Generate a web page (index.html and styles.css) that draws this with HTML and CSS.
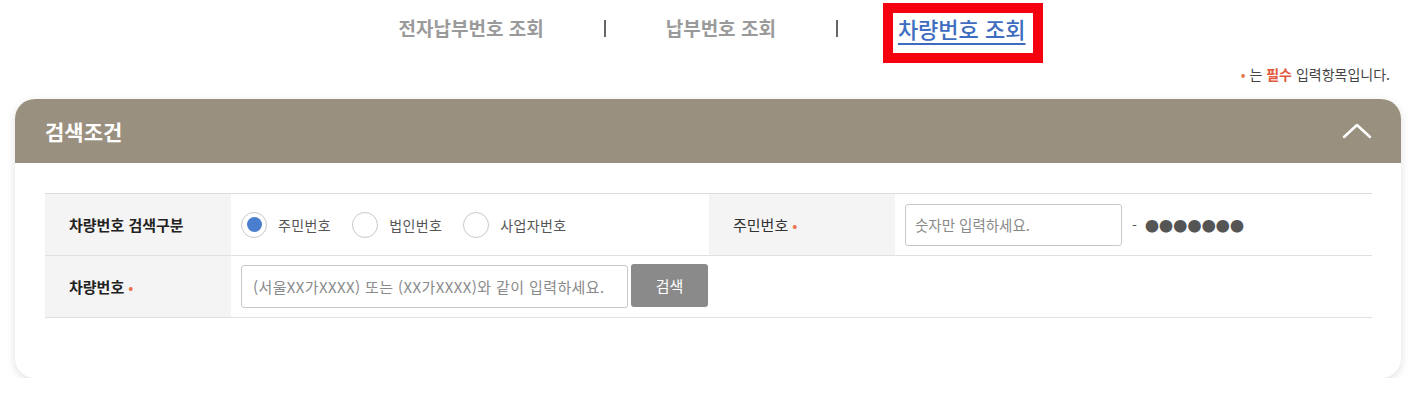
FILE: index.html
```html
<!DOCTYPE html>
<html lang="ko">
<head>
    <meta charset="UTF-8">
    <meta name="viewport" content="width=device-width, initial-scale=1.0">
    <title>차량번호 조회</title>
    <link rel="stylesheet" href="styles.css">
</head>
<body>
    <ul class="tabs">
        <li><a>전자납부번호 조회</a></li>
        <li class="sep"></li>
        <li><a>납부번호 조회</a></li>
        <li class="sep"></li>
        <li class="active"><a>차량번호 조회</a></li>
    </ul>

    <p class="notice"><span class="dot">•</span> 는 <strong>필수</strong> 입력항목입니다.</p>

    <div class="card">
        <div class="card-head">
            <h2>검색조건</h2>
            <svg class="toggle" width="30" height="16" viewBox="0 0 30 16">
                <polyline points="2,14 15,2 28,14" fill="none" stroke="#fff" stroke-width="2.5" stroke-linecap="round" stroke-linejoin="round"/>
            </svg>
        </div>
        <div class="card-body">
            <div class="search-table">
                <div class="th">차량번호 검색구분</div>
                <div class="td">
                    <label class="radio checked"><span class="circle"></span>주민번호</label>
                    <label class="radio"><span class="circle"></span>법인번호</label>
                    <label class="radio"><span class="circle"></span>사업자번호</label>
                </div>
                <div class="th light">주민번호 <span class="req">•</span></div>
                <div class="td">
                    <input type="text" class="input-jumin" placeholder="숫자만 입력하세요.">
                    <span class="dash">-</span>
                    <span class="masked">●●●●●●●</span>
                </div>

                <div class="th">차량번호 <span class="req">•</span></div>
                <div class="td wide">
                    <input type="text" class="input-car" placeholder="(서울XX가XXXX) 또는 (XX가XXXX)와 같이 입력하세요.">
                    <button>검색</button>
                </div>
            </div>
        </div>
    </div>
</body>
</html>
```

FILE: styles.css
```css
body { margin: 0; background: #fff; font-family: "Noto Sans CJK KR", "Noto Sans", sans-serif; color: #222; }

.tabs { list-style: none; margin: 0; padding: 14px 0 0; height: 50px; display: flex; justify-content: center; align-items: flex-start; gap: 60px; font-size: 19px; font-weight: bold; line-height: 28px; }
.tabs a { color: #9a9a9a; }
.tabs .sep { width: 2px; height: 17px; margin-top: 6px; background: #666; }
.tabs .active { position: relative; font-size: 22px; font-weight: 500; }
.tabs .active a { color: #3d6cc0; text-decoration: underline; text-decoration-thickness: 2px; text-underline-offset: 5px; }
.tabs .active::after { content: ""; position: absolute; left: -15px; right: -18px; top: -11px; bottom: -21px; border: 10px solid #f5000f; }

.notice { margin: 0; height: 20px; line-height: 20px; text-align: right; padding-right: 34px; font-size: 14px; color: #444; }
.notice .dot { color: #e8754a; }
.notice strong { color: #e2583c; }

.card { margin: 15px 23px 0 15px; border-radius: 20px; background: #fff; box-shadow: 0 3px 10px rgba(0, 0, 0, 0.12); overflow: hidden; }
.card-head { height: 64px; background: #9a907f; display: flex; align-items: center; justify-content: space-between; padding: 0 29px 0 30px; }
.card-head h2 { margin: 0; color: #fff; font-size: 21px; font-weight: bold; }
.card-body { padding: 30px 29px 60px 30px; }

.search-table { display: grid; grid-template-columns: 186px 478px 186px 1fr; border-top: 1px solid #dcdcdc; }
.th, .td { height: 61px; border-bottom: 1px solid #e0e0e0; display: flex; align-items: center; }
.th { background: #f4f4f4; padding-left: 24px; font-size: 15px; font-weight: bold; color: #222; }
.th.light { font-weight: normal; color: #333; }
.td { padding-left: 10px; font-size: 14px; color: #555; }
.td.wide { grid-column: 2 / 5; }
.req { color: #e8754a; margin-left: 4px; font-weight: normal; }

.radio { display: flex; align-items: center; margin-right: 21px; letter-spacing: 0.4px; }
.radio .circle { width: 24px; height: 24px; border: 1px solid #c8c8c8; border-radius: 50%; margin-right: 11px; display: flex; align-items: center; justify-content: center; }
.radio.checked .circle::after { content: ""; width: 15px; height: 15px; border-radius: 50%; background: #4a7fd0; }

input { font-family: inherit; font-size: 14px; border: 1px solid #c8c8c8; border-radius: 3px; padding: 0 10px; box-sizing: border-box; color: #333; }
input::placeholder { color: #8a8a8a; }
.input-jumin { width: 217px; height: 42px; padding-left: 9px; font-size: 14.5px; }
.input-car { width: 387px; height: 43px; padding-left: 11px; font-size: 15px; letter-spacing: 0.4px; }
.dash { margin: 0 8px 0 10px; color: #555; }
.masked { color: #555; font-size: 14px; letter-spacing: 0.2px; }

button { width: 77px; height: 43px; margin-left: 3px; border: none; border-radius: 3px; background: #8a8a8a; color: #fff; font-family: inherit; font-size: 15px; margin-top: -2px; }
```
